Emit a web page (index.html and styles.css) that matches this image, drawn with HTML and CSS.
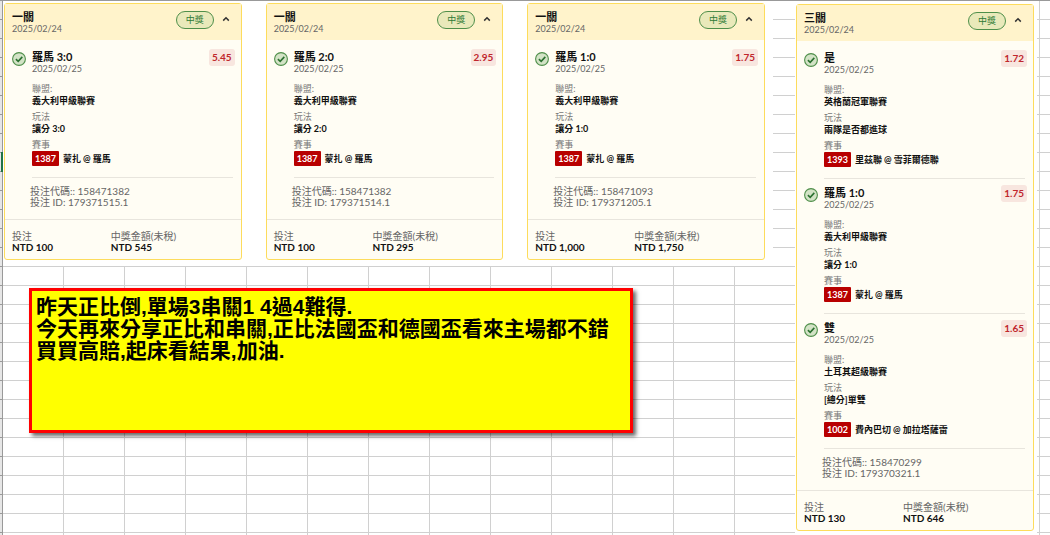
FILE: index.html
```html
<!DOCTYPE html>
<html lang="zh-Hant">
<head>
    <meta charset="UTF-8">
    <meta name="viewport" content="width=device-width, initial-scale=1.0">
    <title>投注紀錄 2025/02/24</title>
    <link rel="stylesheet" href="styles.css">
</head>
<body>
    <!-- shared icons -->
    <svg class="sprite" aria-hidden="true">
        <symbol id="check" viewBox="0 0 14 14">
            <circle cx="7" cy="7" r="6.4" fill="#d3e3c6" stroke="#4f8f4a" stroke-width="1.1"/>
            <path d="M3.9 7.2l2.3 2.2 4.1-4.5" fill="none" stroke="#2b7030" stroke-width="1.6"/>
        </symbol>
        <symbol id="up" viewBox="0 0 8 6">
            <path d="M1.2 4.6L4 1.8l2.8 2.8" fill="none" stroke="#333" stroke-width="1.5"/>
        </symbol>
    </svg>

    <main class="sheet">
        <div class="rows"><span class="active-row"></span></div>

        <div class="left">
            <section class="slips">
                <article class="slip">
                    <header class="slip-head">
                        <div class="slip-name">
                            <h2>一關</h2>
                            <time>2025/02/24</time>
                        </div>
                        <span class="status">中獎</span>
                        <button class="toggle" type="button" aria-label="收合"><svg><use href="#up"/></svg></button>
                    </header>
                    <div class="leg">
                        <svg class="check"><use href="#check"/></svg>
                        <div class="leg-name">
                            <h3>羅馬 3:0</h3>
                            <time>2025/02/25</time>
                        </div>
                        <span class="odds">5.45</span>
                        <dl class="details">
                            <dt>聯盟:</dt>
                            <dd>義大利甲級聯賽</dd>
                            <dt>玩法</dt>
                            <dd>讓分 3:0</dd>
                            <dt>賽事</dt>
                            <dd class="match"><span class="code">1387</span>蒙扎 @ 羅馬</dd>
                        </dl>
                    </div>
                    <div class="ids">
                        <p>投注代碼:: 158471382</p>
                        <p>投注 ID: 179371515.1</p>
                    </div>
                    <dl class="totals">
                        <div><dt>投注</dt><dd>NTD 100</dd></div>
                        <div><dt>中獎金額(未稅)</dt><dd>NTD 545</dd></div>
                    </dl>
                </article>

                <article class="slip">
                    <header class="slip-head">
                        <div class="slip-name">
                            <h2>一關</h2>
                            <time>2025/02/24</time>
                        </div>
                        <span class="status">中獎</span>
                        <button class="toggle" type="button" aria-label="收合"><svg><use href="#up"/></svg></button>
                    </header>
                    <div class="leg">
                        <svg class="check"><use href="#check"/></svg>
                        <div class="leg-name">
                            <h3>羅馬 2:0</h3>
                            <time>2025/02/25</time>
                        </div>
                        <span class="odds">2.95</span>
                        <dl class="details">
                            <dt>聯盟:</dt>
                            <dd>義大利甲級聯賽</dd>
                            <dt>玩法</dt>
                            <dd>讓分 2:0</dd>
                            <dt>賽事</dt>
                            <dd class="match"><span class="code">1387</span>蒙扎 @ 羅馬</dd>
                        </dl>
                    </div>
                    <div class="ids">
                        <p>投注代碼:: 158471382</p>
                        <p>投注 ID: 179371514.1</p>
                    </div>
                    <dl class="totals">
                        <div><dt>投注</dt><dd>NTD 100</dd></div>
                        <div><dt>中獎金額(未稅)</dt><dd>NTD 295</dd></div>
                    </dl>
                </article>

                <article class="slip">
                    <header class="slip-head">
                        <div class="slip-name">
                            <h2>一關</h2>
                            <time>2025/02/24</time>
                        </div>
                        <span class="status">中獎</span>
                        <button class="toggle" type="button" aria-label="收合"><svg><use href="#up"/></svg></button>
                    </header>
                    <div class="leg">
                        <svg class="check"><use href="#check"/></svg>
                        <div class="leg-name">
                            <h3>羅馬 1:0</h3>
                            <time>2025/02/25</time>
                        </div>
                        <span class="odds">1.75</span>
                        <dl class="details">
                            <dt>聯盟:</dt>
                            <dd>義大利甲級聯賽</dd>
                            <dt>玩法</dt>
                            <dd>讓分 1:0</dd>
                            <dt>賽事</dt>
                            <dd class="match"><span class="code">1387</span>蒙扎 @ 羅馬</dd>
                        </dl>
                    </div>
                    <div class="ids">
                        <p>投注代碼:: 158471093</p>
                        <p>投注 ID: 179371205.1</p>
                    </div>
                    <dl class="totals">
                        <div><dt>投注</dt><dd>NTD 1,000</dd></div>
                        <div><dt>中獎金額(未稅)</dt><dd>NTD 1,750</dd></div>
                    </dl>
                </article>
            </section>

            <div class="note">
                <p>昨天正比倒,單場3串關1 4過4難得.</p>
                <p>今天再來分享正比和串關,正比法國盃和德國盃看來主場都不錯</p>
                <p>買買高賠,起床看結果,加油.</p>
            </div>
        </div>

        <section class="combo">
            <article class="slip">
                <header class="slip-head">
                    <div class="slip-name">
                        <h2>三關</h2>
                        <time>2025/02/24</time>
                    </div>
                    <span class="status">中獎</span>
                    <button class="toggle" type="button" aria-label="收合"><svg><use href="#up"/></svg></button>
                </header>
                <div class="leg">
                    <svg class="check"><use href="#check"/></svg>
                    <div class="leg-name">
                        <h3>是</h3>
                        <time>2025/02/25</time>
                    </div>
                    <span class="odds">1.72</span>
                    <dl class="details">
                        <dt>聯盟:</dt>
                        <dd>英格蘭冠軍聯賽</dd>
                        <dt>玩法</dt>
                        <dd>兩隊是否都進球</dd>
                        <dt>賽事</dt>
                        <dd class="match"><span class="code">1393</span>里茲聯 @ 雪菲爾德聯</dd>
                    </dl>
                </div>
                <div class="leg">
                    <svg class="check"><use href="#check"/></svg>
                    <div class="leg-name">
                        <h3>羅馬 1:0</h3>
                        <time>2025/02/25</time>
                    </div>
                    <span class="odds">1.75</span>
                    <dl class="details">
                        <dt>聯盟:</dt>
                        <dd>義大利甲級聯賽</dd>
                        <dt>玩法</dt>
                        <dd>讓分 1:0</dd>
                        <dt>賽事</dt>
                        <dd class="match"><span class="code">1387</span>蒙扎 @ 羅馬</dd>
                    </dl>
                </div>
                <div class="leg">
                    <svg class="check"><use href="#check"/></svg>
                    <div class="leg-name">
                        <h3>雙</h3>
                        <time>2025/02/25</time>
                    </div>
                    <span class="odds">1.65</span>
                    <dl class="details">
                        <dt>聯盟:</dt>
                        <dd>土耳其超級聯賽</dd>
                        <dt>玩法</dt>
                        <dd>[總分]單雙</dd>
                        <dt>賽事</dt>
                        <dd class="match"><span class="code">1002</span>費內巴切 @ 加拉塔薩雷</dd>
                    </dl>
                </div>
                <div class="ids">
                    <p>投注代碼:: 158470299</p>
                    <p>投注 ID: 179370321.1</p>
                </div>
                <dl class="totals">
                    <div><dt>投注</dt><dd>NTD 130</dd></div>
                    <div><dt>中獎金額(未稅)</dt><dd>NTD 646</dd></div>
                </dl>
            </article>
        </section>
    </main>
</body>
</html>
```

FILE: styles.css
```css
* {
    box-sizing: border-box;
}
body, h2, h3, p, dl, dt, dd {
    margin: 0;
}
body {
    font-family: Lato, "Noto Sans CJK TC", sans-serif;
    font-size: 10px;
    line-height: 11px;
    color: #111;
    background: #fff;
}
.sprite {
    display: none;
}

/* spreadsheet background, cells are 61 x 19 */
.sheet {
    position: relative;
    display: grid;
    grid-template-columns: minmax(0, 1fr) 242px;
    gap: 22px;
    align-items: start;
    min-height: 100vh;
    padding: 1px 13px 0 3px;
    background:
        linear-gradient(#999, #999) 0 0 / 100% 1px no-repeat,
        linear-gradient(90deg, #d0d0d0 1px, transparent 1px) 63px 0 / 61px 19px,
        linear-gradient(#d0d0d0 1px, transparent 1px) 0 0 / 61px 19px;
}
.rows {
    position: absolute;
    inset: 0 auto 0 0;
    width: 3px;
    border-right: 1px solid #999;
    background: linear-gradient(#999 1px, #e6e6e6 1px) 0 0 / 3px 19px;
}
.active-row {
    position: absolute;
    top: 152px;
    left: 1px;
    width: 2px;
    height: 20px;
    background: #217346;
}
.slips {
    display: grid;
    grid-template-columns: repeat(3, 1fr);
    gap: 24px;
    padding: 2px 8px 6px 1px;
    background: #fff;
}
.combo {
    min-height: calc(100vh - 1px);
    padding: 3px 3px 3px 1px;
    background: #fff;
}

/* bet slip */
.slip {
    border: 1px solid #fddc5c;
    border-radius: 3px;
    background: #fffdf4;
}
.slip-head {
    display: flex;
    align-items: flex-start;
    padding: 7px 11px 6px 7px;
    background: #fff3cb;
}
.slip-name, .leg-name {
    flex: 1;
}
.slip h2, .slip h3 {
    font-size: 11px;
    line-height: 12px;
}
.slip time {
    display: block;
    color: #666;
    font-size: 9px;
}
.status {
    width: 38px;
    border: 1px solid #4f8f4a;
    border-radius: 9px;
    background: #e9e9ba;
    color: #2f7a35;
    font-size: 9px;
    line-height: 16px;
    text-align: center;
}
.toggle {
    display: flex;
    margin-left: 8px;
    padding: 5px 0;
    border: 0;
    background: none;
    cursor: pointer;
}
.toggle svg {
    width: 8px;
    height: 6px;
}
.leg {
    display: grid;
    grid-template-columns: 14px 1fr auto;
    column-gap: 6px;
    padding: 9px 6px 0 7px;
}
.leg + .leg {
    padding-top: 6px;
}
.check {
    width: 14px;
    height: 14px;
    margin-top: 3px;
}
.leg-name {
    padding-top: 2px;
}
.odds {
    align-self: start;
    padding: 0 3px;
    border-radius: 3px;
    background: #f8e6df;
    color: #c0272d;
    font-weight: bold;
    line-height: 17px;
}
.details {
    grid-column: 2 / 4;
    margin: 9px 2px 0 0;
    padding-bottom: 11px;
    border-bottom: 1px solid #e8e5dd;
    font-size: 9px;
    line-height: 12px;
}
.details dt {
    color: #777;
}
.details dd {
    margin-bottom: 4px;
    font-weight: bold;
}
.details .match {
    display: flex;
    align-items: center;
    gap: 4px;
    margin: 0;
    line-height: 15px;
}
.code {
    padding: 0 3px;
    border-radius: 1px;
    background: #b80000;
    color: #fff;
}
.ids {
    padding: 8px 25px 11px;
    color: #666;
}
.totals {
    display: grid;
    grid-template-columns: 99fr 123fr;
    padding: 11px 7px 6px;
    border-top: 1px solid #e8e5dd;
}
.totals dt {
    color: #666;
}
.totals dd {
    font-weight: bold;
}

/* comment box */
.note {
    max-width: 604px;
    min-height: 145px;
    margin: 22px 0 0 26px;
    padding: 5px 4px;
    border: 3px solid #f00;
    background: #ff0;
    box-shadow: 3px 3px 4px rgba(0, 0, 0, 0.6);
    color: #000;
    font: bold 21px/22px "Liberation Sans", "Noto Sans CJK TC", sans-serif;
}
```
